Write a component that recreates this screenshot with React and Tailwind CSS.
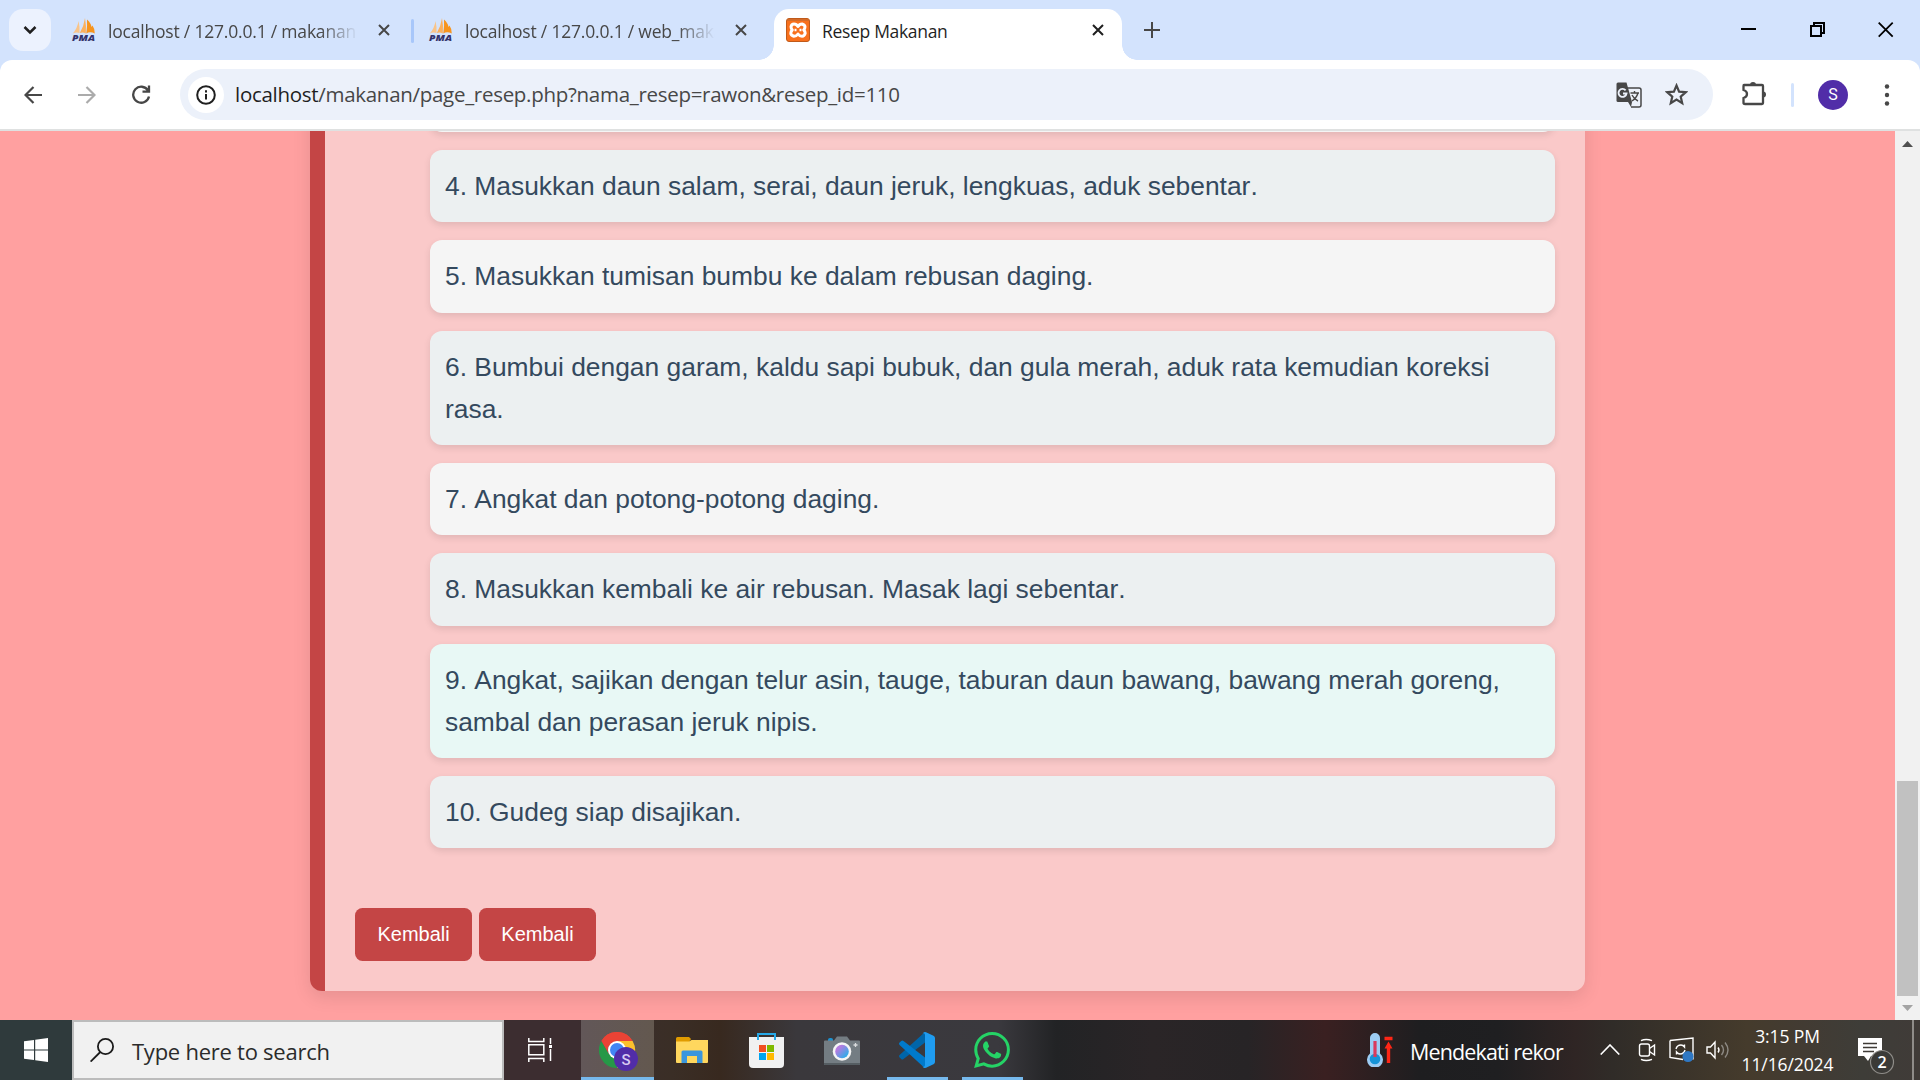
import React from "react";

const UI = "font-['Open_Sans',sans-serif] whitespace-nowrap";

const steps = [
  { t: "4. Masukkan daun salam, serai, daun jeruk, lengkuas, aduk sebentar.", c: "bg-[#ecf0f1]" },
  { t: "5. Masukkan tumisan bumbu ke dalam rebusan daging.", c: "bg-[#f5f5f5]" },
  { t: "6. Bumbui dengan garam, kaldu sapi bubuk, dan gula merah, aduk rata kemudian koreksi rasa.", c: "bg-[#ecf0f1]" },
  { t: "7. Angkat dan potong-potong daging.", c: "bg-[#f5f5f5]" },
  { t: "8. Masukkan kembali ke air rebusan. Masak lagi sebentar.", c: "bg-[#ecf0f1]" },
  { t: "9. Angkat, sajikan dengan telur asin, tauge, taburan daun bawang, bawang merah goreng, sambal dan perasan jeruk nipis.", c: "bg-[#e8f8f5]" },
  { t: "10. Gudeg siap disajikan.", c: "bg-[#ecf0f1]" },
];

function PmaIcon() {
  return (
    <svg className="h-6 w-6 shrink-0 overflow-visible" viewBox="0 0 24 24">
      <path d="M6.500 3Q8 9 7.500 15Q4 14 .8 15.500Q5.500 10 6.500 3Z" fill="#f9c489" />
      <path d="M13 0Q14.500 8 13.800 15.500Q11 13.800 7.800 15Q12 8 13 0Z" fill="#fbb05c" />
      <path d="M15 1.500Q19 5 19.500 9L20.500 7.500Q23 11 22.800 15.500Q18 13 14.300 15.500Q15.500 8 15 1.500Z" fill="#f7941d" />
      <text x="0" y="23" fontSize="8.500" fontWeight="800" fontStyle="italic" textLength="23" lengthAdjust="spacingAndGlyphs" fill="#34336b" fontFamily="Open Sans, sans-serif">PMA</text>
    </svg>
  );
}

function XamppIcon() {
  return (
    <svg className="h-6 w-6 shrink-0" viewBox="0 0 24 24">
      <rect x=".5" y=".5" width="23" height="23" rx="2.500" fill="#f8701c" stroke="#c05a1a" />
      <path d="M1 2h22" stroke="#c96a2c" strokeWidth="1.500" />
      <path d="M12 8.500Q10.500 6 8 6T5 8.800Q5 10.500 6.300 12Q4.800 13.200 4.800 15.200T8 18.200Q10.500 18.200 12 16Q13.500 18.200 16 18.200T19.200 15.200Q19.200 13.200 17.700 12Q19 10.500 19 8.800T16 6Q13.500 6 12 8.500Z" fill="none" stroke="#fff" strokeWidth="3" strokeLinejoin="round" />
      <path d="M8.500 12h2M13.500 12h2" stroke="#fff" strokeWidth="2.600" />
    </svg>
  );
}

function Cross({ className }) {
  return (
    <svg className={className} viewBox="0 0 12 12" fill="none" stroke="currentColor" strokeWidth="2">
      <path d="M1 1l10 10M11 1L1 11" />
    </svg>
  );
}

function Tab({ title, className }) {
  return (
    <div className={`flex items-center ${className}`}>
      <PmaIcon />
      <div className={`${UI} mt-0.5 ml-3 h-7 w-[250px] overflow-hidden text-[17.5px] leading-7 tracking-[-0.2px] text-[#474747] [mask-image:linear-gradient(to_right,black_85%,transparent)]`}>{title}</div>
      <Cross className="ml-5 h-3 w-3 text-[#474747]" />
    </div>
  );
}

function TabStrip() {
  return (
    <div className="flex h-[60px] bg-[#d3e3fd]">
      <div className="mt-[9px] ml-[9px] flex h-[42px] w-[42px] items-center justify-center rounded-[14px] bg-[#ecf2fe]">
        <svg className="h-3 w-4" viewBox="0 0 16 12" fill="none" stroke="#1f1f1f" strokeWidth="2.500"><path d="M2.500 3L8 8.500 13.500 3" /></svg>
      </div>
      <Tab className="ml-[21px] w-[339px]" title="localhost / 127.0.0.1 / makanan" />
      <div className="mt-[19px] h-6 w-[3px] rounded-full bg-[#a8c7fa]" />
      <Tab className="ml-[15px] w-[330px]" title="localhost / 127.0.0.1 / web_maka" />
      <div className="mt-auto h-[15px] w-[15px] bg-[radial-gradient(circle_at_0_0,transparent_14.500px,white_15px)]" />
      <div className="mt-[9px] flex h-[51px] w-[348px] items-center rounded-t-[15px] bg-white pr-[18px] pb-[9px] pl-3">
        <XamppIcon />
        <span className={`${UI} mt-0.5 ml-3 text-[17.5px] tracking-[-0.32px] text-[#1f1f1f]`}>Resep Makanan</span>
        <Cross className="ml-auto h-3 w-3 text-[#1f1f1f]" />
      </div>
      <div className="mt-auto h-[15px] w-[15px] bg-[radial-gradient(circle_at_100%_0,transparent_14.500px,white_15px)]" />
      <svg className="mt-[22px] ml-[7px] h-4 w-4" viewBox="0 0 16 16" stroke="#474747" strokeWidth="2"><path d="M8 0v16M0 8h16" /></svg>
      <div className="mt-[22px] mr-[26px] ml-auto flex gap-[52.500px]">
        <svg className="h-4 w-4" viewBox="0 0 16 16"><path d="M0 6h15v2H0z" /></svg>
        <svg className="h-4 w-4" viewBox="0 0 16 16" fill="none" stroke="#000" strokeWidth="2"><path d="M1 4h10v10H1zM4 4V1h10v10h-3" /></svg>
        <svg className="h-4 w-4" viewBox="0 0 16 16" fill="none" stroke="#000" strokeWidth="1.800"><path d="M.7.700l14 14M14.700.700l-14 14" /></svg>
      </div>
    </div>
  );
}

function Toolbar() {
  return (
    <div className="h-[71px] bg-[#d3e3fd]">
      <div className="flex h-[71px] items-center rounded-t-xl border-b-2 border-[#dfe1e1] bg-white">
        <svg className="ml-6 h-[18px] w-[18px]" viewBox="0 0 18 18" fill="none" stroke="#474747" strokeWidth="2.200"><path d="M18 9H2M9.500 1L1.500 9l8 8" /></svg>
        <svg className="ml-9 h-[18px] w-[18px]" viewBox="0 0 18 18" fill="none" stroke="#ababab" strokeWidth="2.200"><path d="M0 9h16M8.500 1l8 8-8 8" /></svg>
        <svg className="ml-[35px] h-[19px] w-5" viewBox="0 0 20 19" fill="none" stroke="#474747" strokeWidth="2.300"><path d="M17 5.500A8 8 0 1 0 18 11.500M18 .5v6.200h-6.500" /></svg>
        <div className="ml-[29px] flex h-[51px] w-[1533px] items-center rounded-full bg-[#ecf1fa] pl-[7.500px]">
          <div className="flex h-9 w-9 items-center justify-center rounded-full bg-white">
            <svg className="h-5 w-5" viewBox="0 0 20 20" fill="none" stroke="#1f1f1f" strokeWidth="2"><circle cx="10" cy="10" r="8.800" /><path d="M10 9v5.500M10 5.200v2.200" /></svg>
          </div>
          <span className={`${UI} ml-[11.500px] text-[20.5px] tracking-[-0.29px] text-[#474747]`}><span className="text-[#1f1f1f]">localhost</span>/makanan/page_resep.php?nama_resep=rawon&amp;resep_id=110</span>
          <svg className="ml-auto h-[26px] w-[26px]" viewBox="0 0 26 26">
            <path d="M11 6h12q2 0 2 2v15q0 2-2 2h-8" fill="none" stroke="#474747" strokeWidth="1.500" />
            <path d="M2 .5h8.500L16 20H2Q.5 20 .5 18.500V2Q.5.500 2 .5Z" fill="#474747" />
            <path d="M12 20h4l-1 5Z" fill="#474747" />
            <path d="M14.500 11H23M18.500 9v2M22 11q-1.500 5-6 8M16 13q2 4 6 6" fill="none" stroke="#474747" strokeWidth="1.400" />
            <path d="M9.600 8.300A4 4 0 1 0 10.500 11.500H7" fill="none" stroke="#ecf1fa" strokeWidth="1.900" />
          </svg>
          <svg className="mr-[25px] ml-[23px] h-[23px] w-[23px]" viewBox="0 0 23 23" fill="none" stroke="#474747" strokeWidth="2.200"><path d="M11.500 2.500l2.600 6.100 6.600.6-5 4.400 1.500 6.500-5.700-3.500-5.700 3.500 1.500-6.500-5-4.400 6.600-.6Z" /></svg>
        </div>
        <svg className="mb-1 ml-7 h-[26px] w-[26px]" viewBox="0 0 26 26">
          <path d="M3 5h18q1 0 1 1v17q0 1-1 1H4q-1.500 0-1.500-1v-5q3.500-1 3.500-4t-3.500-4V6Q2.500 5 3 5Z" fill="none" stroke="#474747" strokeWidth="2.300" />
          <path d="M9 5a3 3 0 0 1 6 0ZM22 11.500a3 3 0 0 1 0 6Z" fill="#474747" />
        </svg>
        <div className="ml-6 h-6 w-[3px] rounded-full bg-[#d3e3fd]" />
        <div className="ml-6 flex h-[30px] w-[30px] items-center justify-center rounded-full bg-[#512da8] font-['Roboto',sans-serif] text-[16px] text-white">S</div>
        <svg className="ml-[36px] h-6 w-1.5" viewBox="0 0 6 24" fill="#474747"><circle cx="3" cy="3.500" r="2.200" /><circle cx="3" cy="12" r="2.200" /><circle cx="3" cy="20.500" r="2.200" /></svg>
      </div>
    </div>
  );
}

function RecipePage() {
  return (
    <div className="flex h-[889px] bg-[#ffa0a0]">
      <div className="flex h-[889px] w-[1895px] flex-col items-center overflow-hidden font-['Liberation_Sans',sans-serif]">
        <div className="-mt-[71px] flex h-[931px] w-[1275px] shrink-0 flex-col rounded-[12px] border-l-[15px] border-[#c44545] bg-[#fac9c9] px-[30px] pb-[30px] shadow-[0_6px_18px_rgba(0,0,0,0.1)]">
          <ul className="ml-[75px] flex w-[1125px] flex-col gap-[18px] text-[26.4px] leading-[42.24px] text-[#34495e] [font-kerning:none]">
            <li className="h-[72.100px] rounded-[12px] bg-[#f5f5f5] shadow-[0_3px_7.500px_rgba(0,0,0,0.1)]" />
            {steps.map((s) => (
              <li key={s.t} className={`rounded-[12px] p-[15px] shadow-[0_3px_7.500px_rgba(0,0,0,0.1)] ${s.c}`}>{s.t}</li>
            ))}
          </ul>
          <div className="mt-auto flex gap-[6.700px]">
            {[0, 1].map((i) => (
              <button key={i} className="h-[53px] w-[117.200px] rounded-[7.500px] bg-[#c44545] text-[20px] leading-[23px] text-white">Kembali</button>
            ))}
          </div>
        </div>
      </div>
      <div className="flex w-[25px] flex-col items-center bg-[#f1f1f1]">
        <svg className="mt-[10px] h-[6px] w-[11px]" viewBox="0 0 11 6"><path d="M5.500 0L11 6H0Z" fill="#505050" /></svg>
        <div className="mt-auto h-[215px] w-[21px] bg-[#c1c1c1]" />
        <svg className="mt-[9px] mb-[9px] h-[6px] w-[11px]" viewBox="0 0 11 6"><path d="M5.500 6L11 0H0Z" fill="#a3a3a3" /></svg>
      </div>
    </div>
  );
}

function ChromeIcon() {
  return (
    <svg className="mt-3 ml-[18px] h-10 w-10" viewBox="0 0 40 40">
      <path d="M18 18L2.400 9A18 18 0 0 1 33.600 9Z" fill="#ea4335" />
      <path d="M18 18V9h15.600A18 18 0 0 1 18 36Z" fill="#fbc02d" />
      <path d="M18 18l-7.800 4.500L2.400 9A18 18 0 0 0 18 36l7.800-13.500Z" fill="#269847" />
      <path d="M2.400 9A18 18 0 0 1 33.600 9H18a9 9 0 0 0-7.800 13.500Z" fill="#ea4335" />
      <circle cx="18" cy="18" r="9" fill="#fff" />
      <circle cx="18" cy="18" r="7" fill="#4285f4" />
      <circle cx="27" cy="27" r="12" fill="#512da8" />
      <text x="27" y="32.500" textAnchor="middle" fontSize="15" fontWeight="500" fontFamily="Roboto, sans-serif" fill="#d8caf2">S</text>
    </svg>
  );
}

function Taskbar() {
  return (
    <div className="flex h-[60px] bg-[linear-gradient(90deg,#2f3a3c_0,#2f3a3c_4%,#3c2d30_26%,#3c2d30_30%,#3a2e26_35%,#38291f_37.500%,#3a383c_41.500%,#3a393e_52%,#222325_55%,#2a2527_60%,#272426_65%,#3a2021_69%,#1e1e20_74%,#1f1f21_78%,#2f2524_82%,#302c28_84%,#453b2c_91%,#423b33_94%,#3e3d38_97%,#403b38)] text-white">
      <div className="flex w-[72px] items-center justify-center">
        <svg className="h-6 w-6" viewBox="0 0 24 24" fill="#fff"><path d="M0 3.300L10 2v9.500H0ZM11.200 1.800L24 0v11.500H11.200ZM0 12.600h10V22L0 20.700ZM11.200 12.600H24V24l-12.800-1.800Z" /></svg>
      </div>
      <div className="flex w-[432px] items-center border-2 border-[#bcbcbc] bg-[#f1f1f1]">
        <svg className="ml-4 h-6 w-6" viewBox="0 0 24 24" fill="none" stroke="#1b1b1b" strokeWidth="1.800"><circle cx="15.500" cy="8.500" r="7.600" /><path d="M10.300 14L.6 23.600" /></svg>
        <span className={`${UI} ml-[18px] pt-0.5 text-[22px] tracking-[-0.25px] text-[#2b2b2b]`}>Type here to search</span>
      </div>
      <svg className="mt-[18px] ml-6 h-6 w-6" viewBox="0 0 24 24" fill="none" stroke="#fff" strokeWidth="1.500"><path d="M.8 0v3.500h15V0M.8 24v-3.500h15V24M.8 6.700h15v10H.8ZM22.500 0v6M22.500 11v12" /><path d="M21 7h3v3h-3z" fill="#fff" stroke="none" /></svg>
      <div className="ml-[29px] h-[60px] w-[73px] border-b-[3px] border-[#76b9ed] bg-[linear-gradient(90deg,#625758,#63584f)]">
        <ChromeIcon />
      </div>
      <svg className="mt-[17px] ml-[22px] h-[26px] w-8" viewBox="0 0 32 26">
        <path d="M0 1.500Q0 0 1.500 0H13l2 2-2 3H0Z" fill="#e09b00" />
        <path d="M0 4.500h13L15.500 3H32v22q0 1-1 1H1q-1 0-1-1Z" fill="#ffd75e" />
        <path d="M5.500 26V15q0-1.500 1.500-1.500h18q1.500 0 1.500 1.500v11H21v-7H11v7Z" fill="#3a96dd" />
      </svg>
      <svg className="mt-[13px] ml-[41px] h-[35px] w-[35px]" viewBox="0 0 35 35">
        <path d="M0 4h35v27q0 4-4 4H4q-4 0-4-4Z" fill="#f1f1f1" />
        <path d="M9 7V1h17v6" fill="none" stroke="#27a9e8" strokeWidth="2" />
        <path d="M10 12h7v7h-7z" fill="#f25022" /><path d="M18 12h7v7h-7z" fill="#7fba00" />
        <path d="M10 20h7v7h-7z" fill="#00a4ef" /><path d="M18 20h7v7h-7z" fill="#ffb900" />
      </svg>
      <svg className="mt-4 ml-10 h-[29px] w-9" viewBox="0 0 36 29">
        <defs><linearGradient id="lens" x1="0" y1="0" x2="1" y2="1"><stop offset=".25" stopColor="#b67be0" /><stop offset=".8" stopColor="#38a8e8" /></linearGradient></defs>
        <path d="M4 5V3.500Q4 2 6 2h1q2 0 2 1.500V5Z" fill="#1c93d2" />
        <path d="M1 4.500h9L13 .5h10l3 4h9q1 0 1 1V28q0 1-1 1H1q-1 0-1-1V5.500q0-1 1-1Z" fill="#747d83" />
        <path d="M0 27h36v1q0 1-1 1H1q-1 0-1-1Z" fill="#555d62" />
        <circle cx="18" cy="15.500" r="9.300" fill="#f5f5f5" /><circle cx="18" cy="15.500" r="6.800" fill="url(#lens)" />
        <path d="M31.500 7v4M29.500 9h4" stroke="#d9dcde" strokeWidth="1.300" />
      </svg>
      <div className="ml-[27px] h-[60px] w-[61px] border-b-[3px] border-[#76b9ed]">
        <svg className="mt-3 ml-3 h-9 w-9" viewBox="0 0 36 36">
          <path d="M26 0v10.500L4.500 27q-1.200 1-2.300 0L.6 25.500q-1.200-1.200 0-2.400Z" fill="#0065a9" />
          <path d="M26 36V25.500L4.500 9Q3.300 8 2.200 9L.6 10.500q-1.200 1.200 0 2.400L24 34.500Z" fill="#007acc" />
          <path d="M26 36q-1.500 0-2.500-1.500 2.500 1 2.500-1.500V3q0-2.500-2.500-1.500Q24.500 0 26 0q.6 0 1 .2l7.500 3.600Q36 4.500 36 6v24q0 1.500-1.500 2.200L27 35.800Z" fill="#1f9cf0" />
        </svg>
      </div>
      <div className="ml-[14px] h-[60px] w-[61px] border-b-[3px] border-[#76b9ed]">
        <svg className="mt-3 ml-3 h-9 w-9" viewBox="0 0 24 24" fill="#25d366"><path d="M17.472 14.382c-.297-.149-1.758-.867-2.030-.967-.273-.099-.471-.148-.67.150-.197.297-.767.966-.940 1.164-.173.199-.347.223-.644.075-.297-.150-1.255-.463-2.390-1.475-.883-.788-1.480-1.761-1.653-2.059-.173-.297-.018-.458.130-.606.134-.133.298-.347.446-.520.149-.174.198-.298.298-.497.099-.198.050-.371-.025-.520-.075-.149-.669-1.612-.916-2.207-.242-.579-.487-.500-.669-.510-.173-.008-.371-.010-.570-.010-.198 0-.520.074-.792.372-.272.297-1.040 1.016-1.040 2.479 0 1.462 1.065 2.875 1.213 3.074.149.198 2.096 3.200 5.077 4.487.709.306 1.262.489 1.694.625.712.227 1.360.195 1.871.118.571-.085 1.758-.719 2.006-1.413.248-.694.248-1.289.173-1.413-.074-.124-.272-.198-.570-.347m-5.421 7.403h-.004a9.870 9.870 0 01-5.031-1.378l-.361-.214-3.741.982.998-3.648-.235-.374a9.860 9.860 0 01-1.510-5.260c.001-5.450 4.436-9.884 9.888-9.884 2.640 0 5.122 1.030 6.988 2.898a9.825 9.825 0 012.893 6.994c-.003 5.450-4.437 9.884-9.885 9.884m8.413-18.297A11.815 11.815 0 0012.050 0C5.495 0 .160 5.335.157 11.892c0 2.096.547 4.142 1.588 5.945L.057 24l6.305-1.654a11.882 11.882 0 005.683 1.448h.005c6.554 0 11.890-5.335 11.893-11.893a11.821 11.821 0 00-3.480-8.413Z" /></svg>
      </div>
      <svg className="mt-[13px] ml-[344px] h-[34px] w-[27px]" viewBox="0 0 27 34">
        <path d="M3 5a5 5 0 0 1 10 0v15.500a8 8 0 1 1-10 0Z" fill="#9dccf3" />
        <circle cx="8" cy="26" r="5.300" fill="#1593d8" /><path d="M6.400 8h3.200v16H6.400Z" fill="#d93a5c" />
        <path d="M17.500 3.800h8v3.400h-8zM21.500 8.500l4 7h-2.300V30h-3.400V15.500h-2.300Z" fill="#ff2616" />
      </svg>
      <span className={`${UI} mt-[17px] ml-4 w-[190px] text-[21.500px] leading-[30px] tracking-[-0.85px]`}>Mendekati rekor</span>
      <svg className="mt-6 h-[11px] w-5" viewBox="0 0 20 11" fill="none" stroke="#fff" strokeWidth="1.600"><path d="M.7 10.500L10 1l9.300 9.500" /></svg>
      <svg className="mt-[18px] ml-[18px] h-6 w-[18px]" viewBox="0 0 18 24" fill="none" stroke="#fff" strokeWidth="1.400"><rect x="1.500" y="6" width="10" height="12" rx="2" /><path d="M11.500 10.500L16.500 7v10l-5-3.500M3 2.700Q8 .3 14 2.700M3 21.300q5 2.400 11 0" /></svg>
      <svg className="mt-[17px] ml-[13px] h-[26px] w-[26px]" viewBox="0 0 26 26" fill="none" stroke="#fff" strokeWidth="1.400"><path d="M1 3.500L24 1v21.500M14 22.500L1 20.500V3.500" /><path d="M7 12q1-4 5-4 2 0 3.500 2V7.500M16 13q-1 4-5 4-2 0-3.500-2v2.500" /><circle cx="19" cy="19.500" r="5.500" fill="#2f78c4" stroke="none" /></svg>
      <svg className="mt-5 ml-[11px] h-5 w-6" viewBox="0 0 24 20" fill="none" stroke="#fff" strokeWidth="1.400"><path d="M1 7h3.500L9 2v16l-4.500-5H1Z" /><path d="M12 7.500q2 2.500 0 5" /><path d="M15.500 5q4 5 0 10M19 2.500q6 7.500 0 15" stroke="#8d8983" /></svg>
      <div className={`${UI} ml-[9px] flex w-[97px] flex-col items-center pt-0.5 text-[17.500px] leading-7 tracking-[-0.1px]`}>
        <span>3:15 PM</span>
        <span>11/16/2024</span>
      </div>
      <svg className="mt-[18px] ml-[22px] h-[38px] w-[38px]" viewBox="0 0 38 38">
        <path d="M0 0h24v18H13l-3 5-4-5H0Z" fill="#fff" /><path d="M5 5.500h14M5 9.500h14M5 13.500h11" stroke="#3f3b36" strokeWidth="1.300" />
        <circle cx="24" cy="24" r="11.500" fill="#3b3a37" stroke="#8f8d89" strokeWidth="1.200" />
        <text x="24" y="30" textAnchor="middle" fontSize="16" fontWeight="600" fontFamily="Open Sans, sans-serif" fill="#fff">2</text>
      </svg>
      <div className="mr-1.5 ml-auto h-full w-0.5 bg-[#8f8c89]" />
    </div>
  );
}

export default function App() {
  return (
    <div className="h-[1080px] w-[1920px] overflow-hidden">
      <TabStrip />
      <Toolbar />
      <RecipePage />
      <Taskbar />
    </div>
  );
}
